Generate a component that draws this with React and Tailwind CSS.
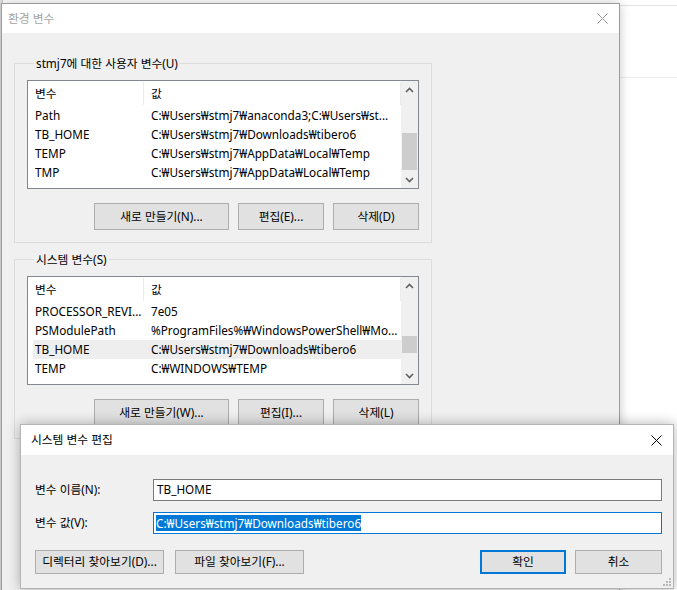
const FONT = "font-['Noto_Sans','Noto_Sans_CJK_KR',sans-serif]"

const userRows = [
  ["Path", "C:₩Users₩stmj7₩anaconda3;C:₩Users₩st..."],
  ["TB_HOME", "C:₩Users₩stmj7₩Downloads₩tibero6"],
  ["TEMP", "C:₩Users₩stmj7₩AppData₩Local₩Temp"],
  ["TMP", "C:₩Users₩stmj7₩AppData₩Local₩Temp"],
]

const systemRows = [
  ["PROCESSOR_REVI...", "7e05"],
  ["PSModulePath", "%ProgramFiles%₩WindowsPowerShell₩Mo..."],
  ["TB_HOME", "C:₩Users₩stmj7₩Downloads₩tibero6"],
  ["TEMP", "C:₩WINDOWS₩TEMP"],
]

function CloseX({ color }) {
  return (
    <svg width="11" height="11" viewBox="0 0 11 11">
      <path d="M0.5 0.5 L10.5 10.5 M10.5 0.5 L0.5 10.5" stroke={color} strokeWidth="1" fill="none" />
    </svg>
  )
}

function Chevron({ up }) {
  return (
    <svg width="9" height="6" viewBox="0 0 9 6">
      <path d={up ? "M1 5 L4.5 1.5 L8 5" : "M1 1 L4.5 4.5 L8 1"} stroke="#606060" strokeWidth="1.6" fill="none" />
    </svg>
  )
}

function ListBox({ rows, highlight, thumbTop, thumbHeight }) {
  return (
    <div className="flex w-[392px] h-[109px] border border-[#828790] bg-white">
      <div className="flex-1 flex flex-col">
        <div className="flex h-[25px] items-center">
          <div className="w-[116px] h-[23px] pl-[7px] flex items-center border-r border-[#ebebeb]">변수</div>
          <div className="flex-1 h-[23px] pl-[7px] flex items-center border-r border-[#ebebeb]">값</div>
        </div>
        {rows.map(([name, value], i) => (
          <div
            key={name}
            className={`flex h-[19px] items-center ml-[5px] ${i === highlight ? "bg-[#eeeeee]" : ""}`}
          >
            <div className="w-[111px] pl-[2px] whitespace-nowrap">{name}</div>
            <div className="pl-[7px] whitespace-nowrap">{value}</div>
          </div>
        ))}
      </div>
      <div className="w-[17px] bg-[#f0f0f0] flex flex-col">
        <div className="h-[17px] flex items-center justify-center">
          <Chevron up />
        </div>
        <div className="flex-1 px-[1px]">
          <div className="bg-[#cdcdcd]" style={{ marginTop: thumbTop, height: thumbHeight }} />
        </div>
        <div className="h-[17px] flex items-center justify-center">
          <Chevron />
        </div>
      </div>
    </div>
  )
}

function Button({ children, width, height = "h-[27px]", primary }) {
  return (
    <div
      className={`${width} ${height} flex items-center justify-center bg-[#e1e1e1] ${
        primary ? "border-2 border-[#0078d7]" : "border border-[#adadad]"
      }`}
    >
      {children}
    </div>
  )
}

function Group({ label, rows, highlight, thumbTop, thumbHeight, buttons, className = "" }) {
  return (
    <fieldset className={`w-[417px] border border-[#dcdcdc] px-[12px] pb-[12px] ${className}`}>
      <legend className="ml-[7px] px-[2px] leading-[16px]">{label}</legend>
      <div className="mt-[9px]">
        <ListBox rows={rows} highlight={highlight} thumbTop={thumbTop} thumbHeight={thumbHeight} />
      </div>
      <div className="flex justify-end gap-[9px] mt-[14px] w-[392px]">
        <Button width="w-[135px]">{buttons[0]}</Button>
        <Button width="w-[86px]">{buttons[1]}</Button>
        <Button width="w-[86px]">{buttons[2]}</Button>
      </div>
    </fieldset>
  )
}

export default function App() {
  return (
    <div className={`relative w-[677px] h-[590px] overflow-hidden bg-white text-[11.75px] text-black ${FONT}`}>
      {/* windows behind */}
      <div className="absolute left-0 top-0 w-[3px] h-[590px] bg-[#e0e0e0] border-r border-[#cccccc]" />
      <div className="absolute left-[480px] top-[5px] w-[220px] h-[600px] border-t border-[#e2e2e2] bg-white">
        <div className="h-[72px] border-b border-[#ececec]" />
      </div>

      {/* 환경 변수 */}
      <div className="absolute left-[1px] top-[3px] w-[619px] h-[640px] border border-[#9c9c9c] bg-[#f0f0f0] shadow-[0_0_10px_rgba(0,0,0,0.22)]">
        <div className="h-[29px] bg-white flex items-center justify-between pl-[6px] pr-[11px]">
          <span className="text-[#a3a3a3]">환경 변수</span>
          <CloseX color="#9a9a9a" />
        </div>
        <div className="px-[12px] pt-[22px]">
          <Group
            label="stmj7에 대한 사용자 변수(U)"
            rows={userRows}
            thumbTop={35}
            thumbHeight={37}
            buttons={["새로 만들기(N)...", "편집(E)...", "삭제(D)"]}
          />
          <Group
            className="mt-[8px]"
            label="시스템 변수(S)"
            rows={systemRows}
            highlight={2}
            thumbTop={42}
            thumbHeight={17}
            buttons={["새로 만들기(W)...", "편집(I)...", "삭제(L)"]}
          />
        </div>
      </div>

      {/* 시스템 변수 편집 */}
      <div className="absolute left-[20px] top-[424px] w-[654px] h-[165px] border border-[#b4b4b4] bg-[#f0f0f0] shadow-[0_0_12px_rgba(0,0,0,0.3)]">
        <div className="h-[30px] bg-white flex items-center justify-between pl-[10px] pr-[11px]">
          <span>시스템 변수 편집</span>
          <CloseX color="#000" />
        </div>
        <div className="pl-[14px] pr-[11px] pt-[24px] pb-[14px] flex flex-col">
          <div className="flex items-center">
            <div className="w-[118px]">변수 이름(N):</div>
            <div className="flex-1 h-[22px] border border-[#7a7a7a] bg-white flex items-center pl-[3px]">TB_HOME</div>
          </div>
          <div className="flex items-center mt-[11px]">
            <div className="w-[118px]">변수 값(V):</div>
            <div className="flex-1 h-[22px] border border-[#0078d7] bg-white flex items-center pl-[2px]">
              <span className="bg-[#0078d7] text-white leading-[16px]">C:₩Users₩stmj7₩Downloads₩tibero6</span>
            </div>
          </div>
          <div className="flex items-center mt-[16px]">
            <Button width="w-[129px]" height="h-[24px]">디렉터리 찾아보기(D)...</Button>
            <div className="ml-[11px]">
              <Button width="w-[129px]" height="h-[24px]">파일 찾아보기(F)...</Button>
            </div>
            <div className="flex-1" />
            <Button width="w-[86px]" height="h-[24px]" primary>확인</Button>
            <div className="ml-[9px]">
              <Button width="w-[87px]" height="h-[24px]">취소</Button>
            </div>
          </div>
        </div>
        <svg className="absolute right-[2px] bottom-[2px]" width="9" height="9" viewBox="0 0 9 9">
          <rect x="7" y="1" width="2" height="2" fill="#b8b8b8" />
          <rect x="4" y="4" width="2" height="2" fill="#b8b8b8" />
          <rect x="7" y="4" width="2" height="2" fill="#b8b8b8" />
          <rect x="1" y="7" width="2" height="2" fill="#b8b8b8" />
          <rect x="4" y="7" width="2" height="2" fill="#b8b8b8" />
          <rect x="7" y="7" width="2" height="2" fill="#b8b8b8" />
        </svg>
      </div>
    </div>
  )
}
